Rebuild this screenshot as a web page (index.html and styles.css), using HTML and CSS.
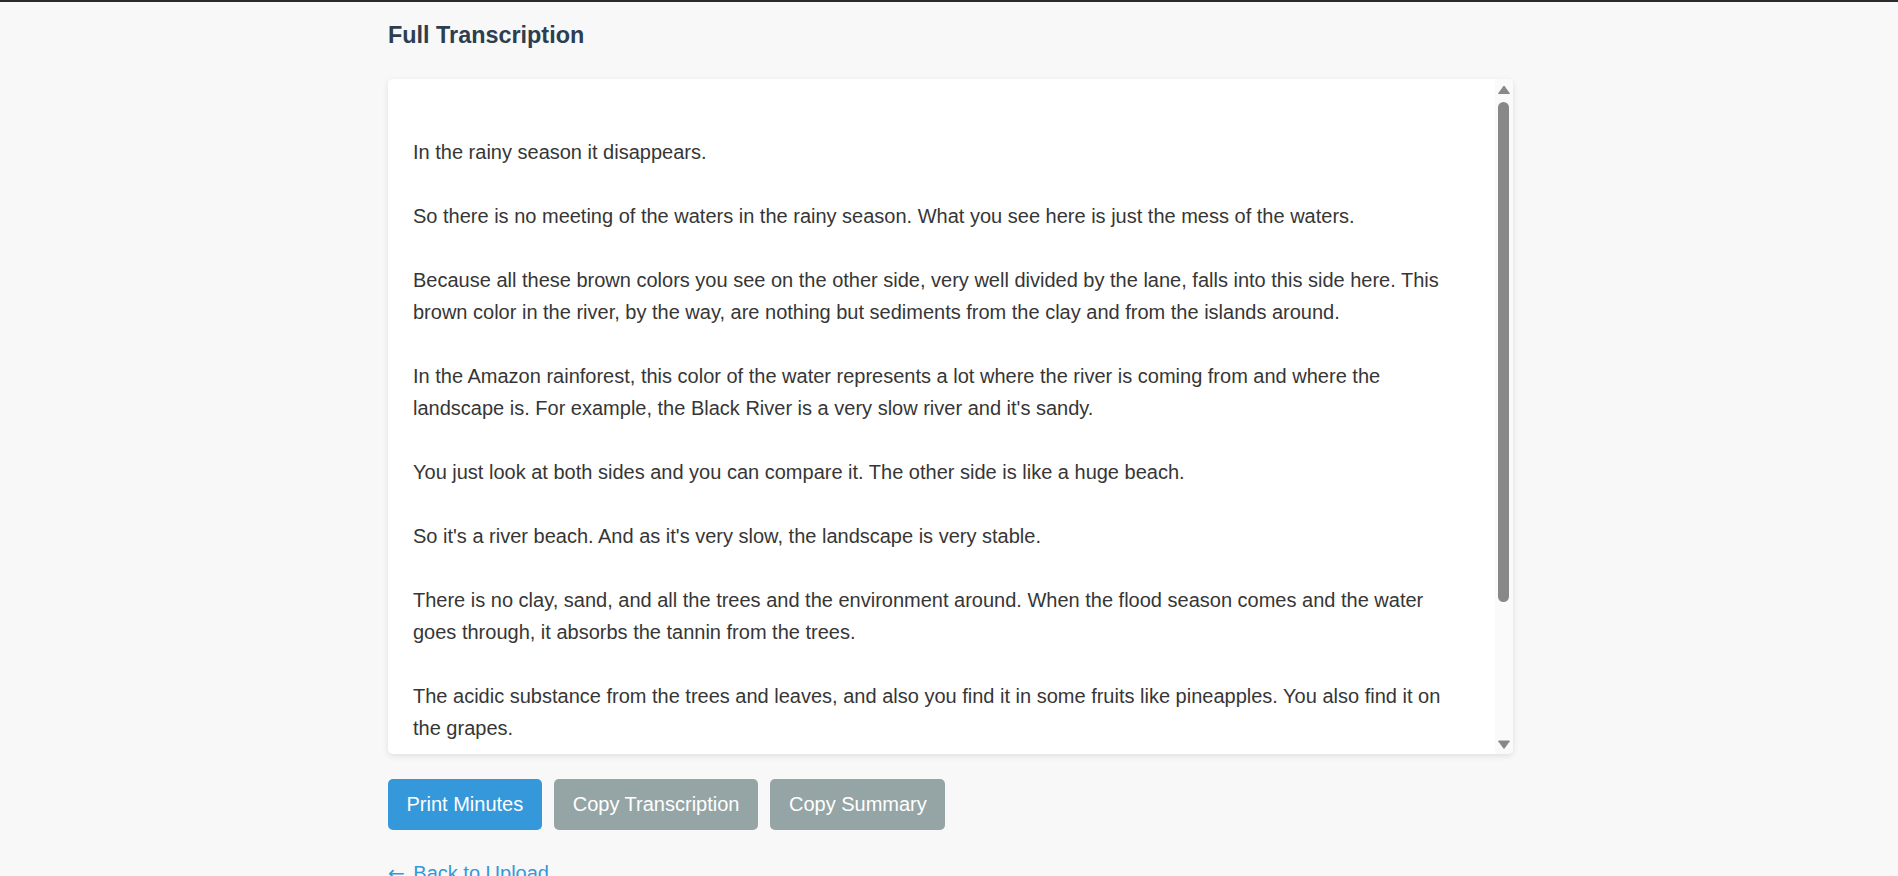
FILE: index.html
```html
<!DOCTYPE html>
<html lang="en">
<head>
<meta charset="utf-8">
<title>Full Transcription</title>
<link rel="stylesheet" href="styles.css">
</head>
<body>
<div class="topbar"></div>
<main class="container">
  <h3 class="section-title">Full Transcription</h3>
  <div class="card">
    <div class="transcript">
      <p>In the rainy season it disappears.</p>
      <p>So there is no meeting of the waters in the rainy season. What you see here is just the mess of the waters.</p>
      <p>Because all these brown colors you see on the other side, very well divided by the lane, falls into this side here. This brown color in the river, by the way, are nothing but sediments from the clay and from the islands around.</p>
      <p>In the Amazon rainforest, this color of the water represents a lot where the river is coming from and where the landscape is. For example, the Black River is a very slow river and it's sandy.</p>
      <p>You just look at both sides and you can compare it. The other side is like a huge beach.</p>
      <p>So it's a river beach. And as it's very slow, the landscape is very stable.</p>
      <p>There is no clay, sand, and all the trees and the environment around. When the flood season comes and the water goes through, it absorbs the tannin from the trees.</p>
      <p>The acidic substance from the trees and leaves, and also you find it in some fruits like pineapples. You also find it on the grapes.</p>
      <p>That's why the water of the Black River looks so dark, almost like tea.</p>
    </div>
    <div class="scrollbar" aria-hidden="true">
      <div class="sb-btn">
        <svg width="18" height="18" viewBox="0 0 18 18"><polygon points="3.5,14.5 14.5,14.5 9,7" fill="#888" stroke="#888" stroke-width="1" stroke-linejoin="round"/></svg>
      </div>
      <div class="sb-track">
        <div class="sb-thumb"></div>
      </div>
      <div class="sb-btn">
        <svg width="18" height="18" viewBox="0 0 18 18"><polygon points="3.5,5 14.5,5 9,12.5" fill="#888" stroke="#888" stroke-width="1" stroke-linejoin="round"/></svg>
      </div>
    </div>
  </div>
  <div class="actions">
    <button class="btn btn-primary" type="button">Print Minutes</button>
    <button class="btn btn-secondary" type="button">Copy Transcription</button>
    <button class="btn btn-secondary" type="button">Copy Summary</button>
  </div>
  <div class="back">
    <a class="back-link" href="#"><span class="arrow">&larr;</span> Back to Upload</a>
  </div>
</main>
</body>
</html>
```

FILE: styles.css
```css
html, body {
  margin: 0;
  padding: 0;
}

body {
  background: #f8f8f8;
  font-family: "Liberation Sans", Arial, sans-serif;
  color: #333;
  padding-left: 3px;
  overflow: hidden;
}

.topbar {
  height: 2px;
  background: #2b2b2f;
  margin-left: -3px;
}

.container {
  width: 1125px;
  margin: 0 auto;
}

.section-title {
  margin: 20px 0 30px;
  font-size: 23.4px;
  line-height: 27px;
  font-weight: bold;
  color: #2c3e50;
}

.card {
  display: flex;
  height: 675px;
  background: #fff;
  border-radius: 5px;
  box-shadow: 0 2px 6px rgba(0, 0, 0, 0.1);
  overflow: hidden;
}

.transcript {
  flex: 1;
  min-width: 0;
  padding: 25px;
  overflow: hidden;
  font-size: 20px;
  line-height: 32px;
  color: #363636;
}

.transcript p {
  margin: 32px 0 0;
}

.scrollbar {
  width: 18px;
  flex: none;
  display: flex;
  flex-direction: column;
  background: #fafafa;
}

.sb-btn {
  height: 18px;
  flex: none;
}

.sb-btn svg {
  display: block;
}

.sb-track {
  flex: 1;
  padding-top: 4.7px;
}

.sb-thumb {
  width: 11px;
  height: 500px;
  margin-left: 3.3px;
  border-radius: 5.5px;
  background: #888;
}

.actions {
  display: flex;
  gap: 12.5px;
  margin-top: 25px;
}

.btn {
  font-family: "Liberation Sans", Arial, sans-serif;
  font-size: 20px;
  line-height: 23px;
  padding: 14px 18.5px;
  border: none;
  border-radius: 5px;
  color: #fff;
  cursor: pointer;
}

.btn-primary {
  background: #3498db;
}

.btn-secondary {
  background: #95a5a6;
}

.back {
  margin-top: 32px;
  font-size: 20px;
  line-height: 23px;
}

.back-link {
  color: #3498db;
  text-decoration: none;
}

.back-link .arrow {
  font-family: "DejaVu Sans", sans-serif;
  font-size: 20px;
  line-height: 23px;
  margin-right: 3px;
}
```
